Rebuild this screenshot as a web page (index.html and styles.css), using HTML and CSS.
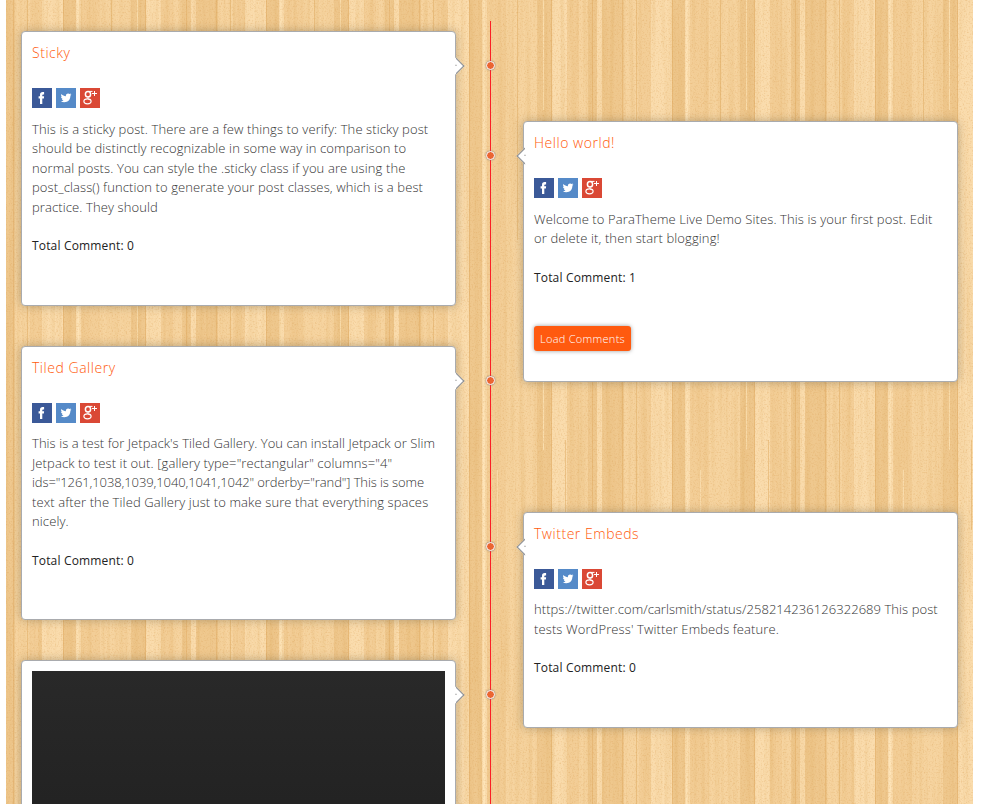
FILE: index.html
```html
<!DOCTYPE html>
<html lang="en">
<head>
<meta charset="utf-8">
<title>Timeline</title>
<link rel="stylesheet" href="styles.css">
</head>
<body>
<svg class="defs" width="0" height="0" aria-hidden="true">
  <symbol id="fb" viewBox="0 0 20 20"><path fill="#3b5998" d="M0 0h20v20H0z"/><path fill="#fff" d="M8 16V10.500H6.600V8.300H8V6.900c0-1.900 1-2.800 2.600-2.800h1.500v2.300h-1c-.6 0-.8.3-.8.8v1.100h1.800l-.2 2.200h-1.600V16z"/></symbol>
  <symbol id="tw" viewBox="0 0 20 20"><path fill="#558ac8" d="M0 0h20v20H0z"/><path fill="#fff" d="M5.400 6c1.300 1.400 2.700 2.100 4.500 2.200-.3-1.800.9-2.800 2.200-2.800.7 0 1.200.3 1.600.7l1.400-.5-.8 1.200 1.100-.2-1 1.200c.1 3.700-2.400 6.500-6.100 6.500-1.300 0-2.500-.3-3.500-1 1.200.1 2.200-.2 3-.8-1-.1-1.700-.7-2-1.600h.9c-1-.3-1.600-1.100-1.700-2.100l.9.2C5 8.200 4.900 7 5.400 6z"/></symbol>
  <symbol id="gp" viewBox="0 0 20 20"><path fill="#da4835" d="M0 0h20v20H0z"/><g fill="none" stroke="#fff"><ellipse cx="8" cy="6.300" rx="2.600" ry="2.800" stroke-width="1.500"/><path stroke-width="1" d="M8.500 3.400h4M8.500 9.200c-2 1.100-.2 1.700 1.800 2.900"/><ellipse cx="7.500" cy="13.300" rx="3.600" ry="2.500" stroke-width="1.200"/><path stroke-width="1" d="M14.500 3v5M12 5.500h5"/></g></symbol>
</svg>
<main class="timeline">
  <svg class="wood" width="967" height="804" aria-hidden="true">
    <defs>
      <pattern id="planks" x="36" width="203" height="804" patternUnits="userSpaceOnUse">
        <path fill="#f6d4a0" d="M0 0h203v804H0z"/>
        <path fill="#fadcad" d="M0 0h21v804H0zM34 0h5v804h-5zM104 0h15v804h-15zM149 0h5v804h-5z"/>
        <path fill="#efc88e" d="M21 0h13v804H21zM89 0h15v804H89zM140 0h9v804h-9zM154 0h22v804h-22z"/>
        <path fill="#f3ce97" d="M39 0h19v804H39zM119 0h12v804h-12zM191 0h12v804h-12z"/>
        <path fill="#e3b16a" opacity=".6" d="M21 0h1v804h-1zM103 0h1v804h-1zM144 0h1v804h-1zM174 0h1v804h-1zM69 0h1v240h-1zM117 440h1v90h-1zM188 0h1v804h-1z"/>
        <path fill="#ffe7bd" opacity=".7" d="M35 0h2v804h-2zM95 0h1v110h-1zM95 300h1v150h-1zM49 470h1v90h-1z"/>
      </pattern>
      <filter id="streaks" x="0" y="0" width="100%" height="100%" color-interpolation-filters="sRGB"><feTurbulence type="fractalNoise" baseFrequency=".22 .005" numOctaves="3" seed="7"/><feColorMatrix values="0 0 0 0 .86  0 0 0 0 .66  0 0 0 0 .36  .55 0 0 0 -.22"/></filter>
      <filter id="specks" x="0" y="0" width="100%" height="100%" color-interpolation-filters="sRGB"><feTurbulence type="fractalNoise" baseFrequency=".65" numOctaves="2" seed="3"/><feColorMatrix values="0 0 0 0 .84  0 0 0 0 .6  0 0 0 0 .3  .8 0 0 0 -.39"/></filter>
    </defs>
    <rect width="967" height="804" fill="url(#planks)"/>
    <rect width="967" height="804" filter="url(#streaks)"/>
    <rect width="967" height="804" filter="url(#specks)"/>
  </svg>
  <div class="line"></div>
  <div class="column left">
    <article class="card sticky">
      <i class="arrow"></i><i class="dot"></i>
      <h2>Sticky</h2>
      <div class="share"><svg><use href="#fb"/></svg><svg><use href="#tw"/></svg><svg><use href="#gp"/></svg></div>
      <p>This is a sticky post. There are a few things to verify: The sticky post<br>should be distinctly recognizable in some way in comparison to<br>normal posts. You can style the .sticky class if you are using the<br>post_class() function to generate your post classes, which is a best<br>practice. They should</p>
      <div class="total">Total Comment: 0</div>
    </article>
    <article class="card gallery">
      <i class="arrow"></i><i class="dot"></i>
      <h2>Tiled Gallery</h2>
      <div class="share"><svg><use href="#fb"/></svg><svg><use href="#tw"/></svg><svg><use href="#gp"/></svg></div>
      <p><span class="snug">This is a test for Jetpack's Tiled Gallery. You can install Jetpack or Slim</span><br>Jetpack to test it out. [gallery type="rectangular" columns="4"<br><span class="tight">ids="1261,1038,1039,1040,1041,1042" orderby="rand"] This is some</span><br>text after the Tiled Gallery just to make sure that everything spaces<br>nicely.</p>
      <div class="total">Total Comment: 0</div>
    </article>
    <article class="card media">
      <i class="arrow"></i><i class="dot"></i>
      <div class="video"></div>
    </article>
  </div>
  <div class="column right">
    <article class="card hello">
      <i class="arrow"></i><i class="dot"></i>
      <h2>Hello world!</h2>
      <div class="share"><svg><use href="#fb"/></svg><svg><use href="#tw"/></svg><svg><use href="#gp"/></svg></div>
      <p>Welcome to ParaTheme Live Demo Sites. This is your first post. Edit<br>or delete it, then start blogging!</p>
      <div class="total">Total Comment: 1</div>
      <button class="load">Load Comments</button>
    </article>
    <article class="card embeds">
      <i class="arrow"></i><i class="dot"></i>
      <h2>Twitter Embeds</h2>
      <div class="share"><svg><use href="#fb"/></svg><svg><use href="#tw"/></svg><svg><use href="#gp"/></svg></div>
      <p><span class="snug">https://twitter.com/carlsmith/status/258214236126322689 This post</span><br>tests WordPress' Twitter Embeds feature.</p>
      <div class="total">Total Comment: 0</div>
    </article>
  </div>
</main>
</body>
</html>
```
FILE: styles.css
```css
* { box-sizing: border-box; }
body { margin: 0; background: #fff; font-family: "Open Sans", sans-serif; overflow: hidden; }
.defs { position: absolute; }
.timeline { position: relative; width: 967px; height: 804px; margin-left: 6px; padding: 0 15px; display: flex; justify-content: space-between; overflow: hidden; }
.wood { position: absolute; inset: 0; }
.line { position: absolute; left: 484px; top: 21px; bottom: 0; width: 1px; background: #fb1f25; }
.column { width: 435px; }
.left { padding-top: 31px; }
.right { padding-top: 121px; }
.card { position: relative; padding: 10px; background: #fff; border: 1px solid #a9abae; border-radius: 4px; box-shadow: 0 0 10px rgba(100, 90, 70, .42); }
.sticky { height: 275px; margin-bottom: 40px; }
.gallery { height: 274px; margin-bottom: 40px; }
.media { height: 200px; }
.hello { height: 261px; margin-bottom: 130px; }
.embeds { height: 216px; }
h2 { margin: 0; height: 46px; font-size: 14px; line-height: 22px; font-weight: 300; letter-spacing: .53px; color: #ff5a0a; }
.share { display: flex; gap: 4px; height: 20px; }
.share svg { width: 20px; height: 20px; }
p { margin: 11.75px 0 0; font-size: 13px; line-height: 19.5px; font-weight: 300; letter-spacing: .112px; color: #333; white-space: nowrap; }
.gallery p, .embeds p { margin-top: 11.25px; }
.snug { letter-spacing: .058px; }
.tight { letter-spacing: -.095px; }
.total { margin-top: 19px; font-size: 12px; line-height: 20px; letter-spacing: .17px; color: #222; }
.load { display: block; margin-top: 38.25px; width: 97px; height: 25px; padding: 0; border: 0; border-radius: 3px; background: #ff5a0f; color: #fff; font: 300 11px/25px "Open Sans", sans-serif; letter-spacing: .28px; box-shadow: 0 0 4px rgba(0, 0, 0, .4); }
.video { height: 180px; background: linear-gradient(#292929, #232323 130px); }
.arrow { position: absolute; top: 28px; width: 12px; height: 12px; background: #fff; border: 1px solid #8a8c90; transform: rotate(45deg); }
.left .arrow { right: -6.5px; border-left-color: #fff; border-bottom-color: #fff; }
.right .arrow { left: -5px; border-right-color: #fff; border-top-color: #fff; }
.arrow::after { content: ""; position: absolute; left: 4px; top: 4px; width: 1px; height: 1px; background: #777; }
.dot { position: absolute; top: 29px; width: 9px; height: 9px; border: 1px solid #fff; border-radius: 50%; background: #eb6532; box-shadow: 0 0 2px 0 #777; }
.left .dot { left: 464px; }
.right .dot { left: -38px; }
```
